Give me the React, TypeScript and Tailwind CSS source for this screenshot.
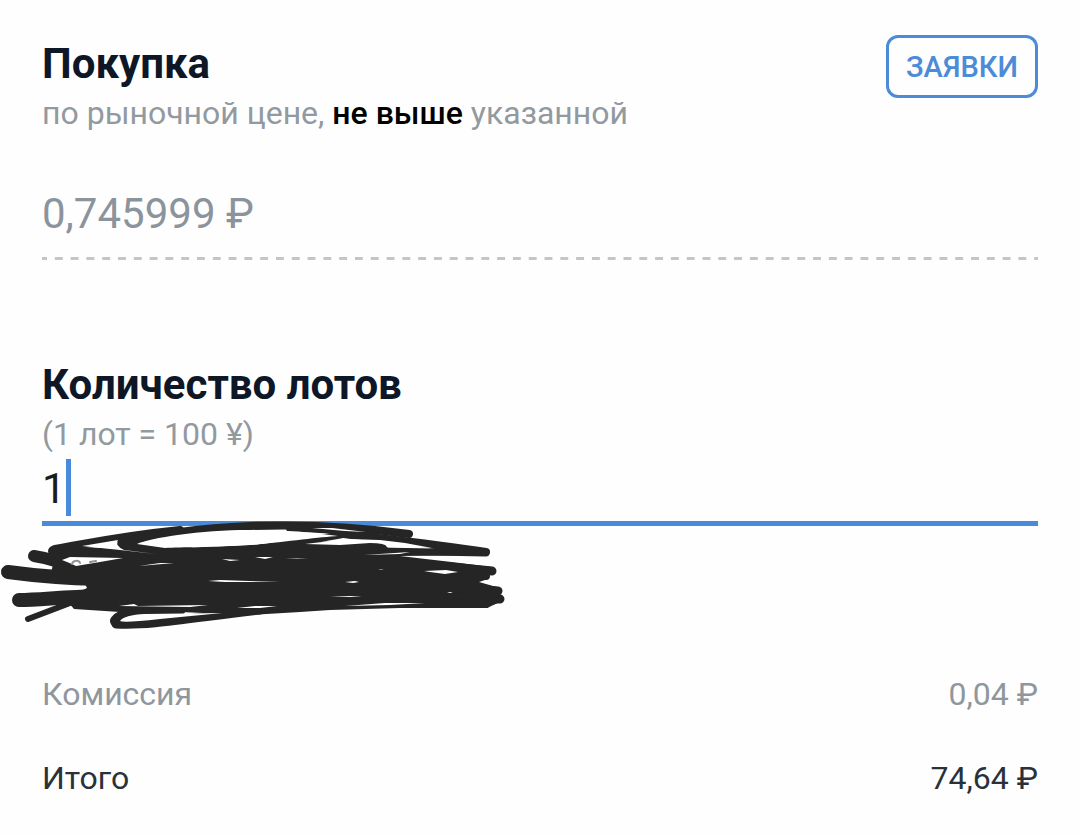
import type { ReactNode } from "react";

type SummaryRow = {
  label: string;
  value: string;
  tone: string;
};

const ROWS: SummaryRow[] = [
  { label: "Комиссия", value: "0,04 ₽", tone: "text-[#8f969d]" },
  { label: "Итого", value: "74,64 ₽", tone: "text-[#29323a]" },
];

const TITLE = "text-[42px] leading-[48px] font-bold text-[#0d1726]";
const HINT = "text-[32px] leading-[50px] text-[#92999f]";

function Scribble() {
  return (
    <svg
      className="pointer-events-none absolute -top-[11px] -left-[42px] h-[125px] w-[520px]"
      viewBox="0 515 520 125"
      fill="none"
      stroke="#252525"
      strokeLinecap="round"
      strokeLinejoin="round"
      aria-hidden
    >
      <path
        fill="#252525"
        stroke="none"
        d="M56 552L60 546L120 549L180 548L250 545L305 541L370 543L384 544L388 548L440 550L487 555L400 556L417 558L460 563L491 567L488 579L479 582L500 588L500 602L487 608L400 608L330 610L300 612L250 615L180 612L120 612L74 609L68 602L83 590L87 588L83 580L50 577Z"
      />
      <path strokeWidth="14" d="M8 572C30 575 60 578 100 579" />
      <path strokeWidth="12" d="M34 556C48 558 64 563 84 572" />
      <path strokeWidth="14" d="M19 600C40 600 60 597 100 596" />
      <path strokeWidth="6" d="M28 619L70 603" />
      <path strokeWidth="10" d="M53 551C75 550 100 554 160 557" />
      <path strokeWidth="8" d="M55 549C90 543 120 536 180 530" />
      <path
        strokeWidth="8"
        d="M122 543C150 535 200 528 250 526C310 524 360 527 409 534"
      />
      <path strokeWidth="8" d="M290 528C325 528 350 531 370 535" />
      <path strokeWidth="12" d="M123 545C140 548 160 552 190 553" />
      <path strokeWidth="7" d="M260 548C290 543 315 540 345 534" />
      <path strokeWidth="8" d="M335 533C385 539 435 544 486 552" />
      <path strokeWidth="7" d="M380 551L486 553" />
      <path strokeWidth="8" d="M330 547C350 546 365 546 382 547" />
      <path strokeWidth="9" d="M420 564L492 571" />
      <path strokeWidth="8" d="M420 572L486 576" />
      <path strokeWidth="9" d="M450 587L498 591" />
      <path strokeWidth="9" d="M450 598L500 599" />
      <path strokeWidth="8" d="M450 603L486 604" />
      <path strokeWidth="12" d="M116 621C121 614 138 610 180 609" />
      <path strokeWidth="9" d="M116 624C150 626 190 618 260 610" />

      <g fill="#fff" stroke="none">
        <path d="M62 560L70 557L123 558L100 562L76 566Q70 563 62 560Z" />
        <path d="M82 546L118 540Q114 545 124 550L156 554L120 550Z" />
        <path d="M137 544C150 538 200 530 250 530C285 530 310 532 338 536C320 537 285 542 250 545C215 547 180 547 165 548Z" />
        <path d="M305 544L348 539L380 540L405 543L432 548L388 547Q385 543 370 543L340 545Z" />
        <path d="M312 528L332 528L366 532L345 531Z" />
        <path d="M364 555L410 552L400 554Z" />
        <path d="M139 566L160 563L174 563Z" />
        <path d="M222 559L240 560L230 561Z" />
        <path d="M255 557L273 557L265 559Z" />
        <path d="M285 559L297 558L308 558Z" />
        <path d="M208 581L220 580L280 582L225 582Z" />
        <path d="M345 582L355 581L359 582L353 583Z" />
        <path d="M424 571L446 570L458 572L445 574L430 572Z" />
        <path d="M378 570L384 569L381 570Z" />
        <path d="M330 597L350 596L362 597Z" />
        <path d="M447 592L453 592L450 593Z" />
        <path d="M119 606L134 604L138 606L208 605L190 607Z" />
        <path d="M237 608L255 606L277 606L260 608Z" />
        <path d="M345 606L385 603L425 603L390 605Z" />
        <path d="M120 621Q124 615 145 614L222 613L160 619Q124 623 120 621Z" />
      </g>
      {/* tops of the covered digits */}
      <path stroke="#899096" strokeWidth="2" d="M72 564C73 560 79 560 80 563" />
      <path stroke="#899096" strokeWidth="2" d="M90 562L96 561" />
    </svg>
  );
}

function Row({ label, value, tone }: SummaryRow) {
  return (
    <div className={`flex justify-between text-[32px] leading-[50px] ${tone}`}>
      <dt>{label}</dt>
      <dd>{value}</dd>
    </div>
  );
}

function Hint({ children }: { children: ReactNode }) {
  return <p className={HINT}>{children}</p>;
}

export default function App() {
  return (
    <main className="min-h-screen overflow-hidden bg-[#fefefe] px-[42px] pb-[31px] font-[Roboto,sans-serif]">
      <section>
        <div className="flex items-start justify-between pt-[35px]">
          <div className="pt-[5px]">
            <h2 className={TITLE}>
              <label htmlFor="price">Покупка</label>
            </h2>
            <Hint>
              по рыночной цене,{" "}
              <span className="font-medium text-black">не выше</span> указанной
            </Hint>
          </div>
          <button
            type="button"
            className="h-[63px] rounded-[12px] border-[3px] border-[#4c8bd8] px-[17px] text-[29px] leading-[50px] font-medium text-[#4c8bd8]"
          >
            ЗАЯВКИ
          </button>
        </div>
        <input
          id="price"
          readOnly
          defaultValue="0,745999 ₽"
          className="mt-[52px] block h-[48px] w-full bg-transparent text-[42px] leading-[48px] text-[#8b949c] outline-none"
        />
        <div className="mt-[19px] h-[3px] bg-[linear-gradient(to_right,#c3c5c6_5px,transparent_5px_13px,#c3c5c6_13px)] [background-size:calc(100%/63)_3px]" />
      </section>

      <section className="mt-[101px]">
        <h2 className={TITLE}>
          <label htmlFor="lots">Количество лотов</label>
        </h2>
        <Hint>(1 лот = 100 ¥)</Hint>
        <div className="flex h-[67px] items-start border-b-[5px] border-[#4a8adb]">
          <input
            id="lots"
            inputMode="numeric"
            defaultValue="1"
            className="h-[60px] bg-transparent text-[42px] leading-[60px] text-[#1c1c1c] caret-transparent outline-none [field-sizing:content]"
          />
          <span className="h-[57px] w-[5px] bg-[#4a8adb]" />
        </div>
      </section>

      <div className="relative h-[143px]">
        <Scribble />
      </div>

      <dl className="flex flex-col gap-[34px]">
        {ROWS.map((row) => (
          <Row key={row.label} {...row} />
        ))}
      </dl>
    </main>
  );
}
